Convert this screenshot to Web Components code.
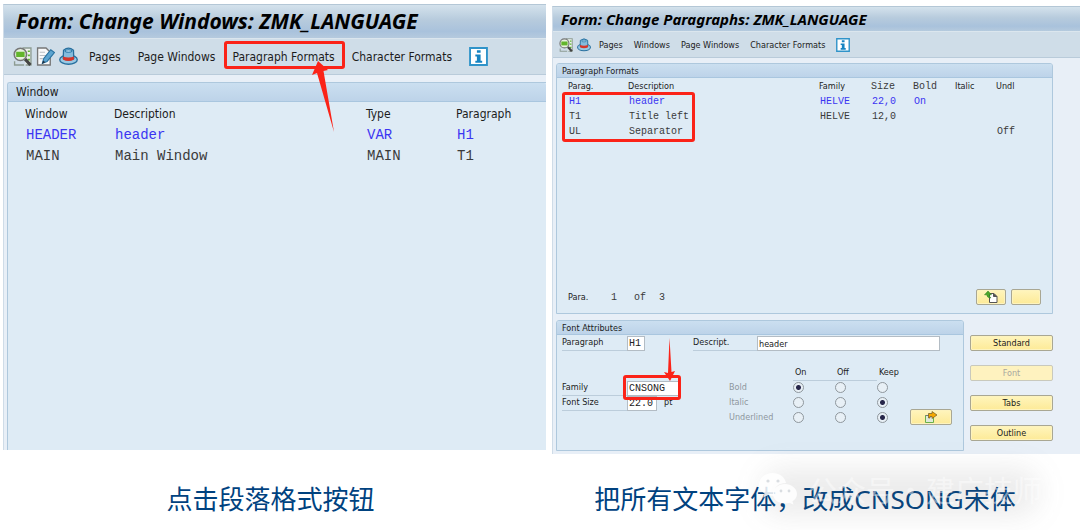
<!DOCTYPE html>
<html lang="zh">
<head>
<meta charset="utf-8">
<title>Form Paragraph Formats</title>
<style>
  body { margin: 0; background: #fff; color: #1c1c1c; font-family: "DejaVu Sans Condensed", "Noto Sans", sans-serif; overflow-x: hidden; }
</style>
</head>
<body>
<form-guide></form-guide>

<script>
const define = (name, css, html) => customElements.define(name, class extends HTMLElement {
  constructor() {
    super();
    const t = document.createElement('template');
    t.innerHTML = `<style>*{box-sizing:border-box}${css}</style>${html}`;
    this.attachShadow({ mode: 'open' }).append(t.content.cloneNode(true));
    for (const el of this.shadowRoot.querySelectorAll('[data-attr]'))
      el.textContent = this.getAttribute(el.dataset.attr) || '';
  }
});

const icons = {
  check: `<path d="M9 1h8v16h-5" fill="#eef3ee" stroke="#8d9c92" stroke-width="1.3"/><path d="M14 4h2M14 8h2M14 12h2" stroke="#5fb531" stroke-width="1.6"/><circle cx="7" cy="7" r="5.8" fill="#e6f2dd" stroke="#777" stroke-width="1.5"/><path d="M3 4.500h8v5H3z" fill="#62b52c"/><path d="M11.500 11.500 16.500 17" stroke="#444" stroke-width="3"/><path d="M1.500 13.500v3.500h9" fill="none" stroke="#8d9c92" stroke-width="1.3"/>`,
  edit: `<path d="M1.500 1h8l4 4v12h-12z" fill="#f8f9fa" stroke="#777" stroke-width="1.3"/><path d="M3.500 5h5M3.500 8h6M3.500 11h3" stroke="#b9bec4"/><path d="M6 15.500 7.300 11 14 2.600 17.500 5.300 10.500 13.700Z" fill="#5ca4d0" stroke="#2872a1" stroke-width="1"/><path d="m5.600 16 1.200-3.200 2 1.600z" fill="#234"/>`,
  hat: `<ellipse cx="9" cy="12" rx="8.300" ry="4.300" fill="#9ac9e4" stroke="#276f9e" stroke-width="1.300"/><path d="M4 11 4.300 3Q9-.8 13.700 3L14 11Q9 13.500 4 11Z" fill="#85bcdd" stroke="#276f9e" stroke-width="1.200"/><path d="M3.900 9Q9 11 14.100 9V12Q9 14.300 3.900 12Z" fill="#d5352a"/><ellipse cx="9" cy="3.800" rx="3.200" ry="1.200" fill="#b8dcf0" stroke="#2f7cac"/>`,
  info: `<path d="M1 1h16v16H1z" fill="#fff" stroke="#2f93c9" stroke-width="1.800"/><path d="M7.500 3h3.500v2.500H7.500zM6 7h5v6h1.500v2H6v-2h1.500V9H6z" fill="#1684c2"/>`
};
customElements.define('tool-icon', class extends HTMLElement {
  constructor() {
    super();
    this.attachShadow({ mode: 'open' }).innerHTML = `<style>:host{display:block}
      button{display:block;padding:0;border:0;background:none;width:var(--icon,20px);height:var(--icon,20px)}svg{display:block;width:100%;height:100%}</style>
      <button aria-label="${this.getAttribute('label')}"><svg viewBox="0 0 18 18">${icons[this.getAttribute('name')]}</svg></button>`;
  }
});

define('tool-button', `
  :host{display:block}
  button{padding:0;border:0;background:none;color:inherit;font:inherit;white-space:nowrap}`,
  `<button><slot></slot></button>`);

define('red-mark', `
  :host{position:absolute;display:block;border:3px solid #fb2318;border-radius:3px;pointer-events:none}
  ::slotted(svg){position:absolute;overflow:visible;display:block}`, `<slot></slot>`);

define('sap-window', `
  :host{display:flex;flex-direction:column;background:#e8eff7;border-top:1px solid #b4c7d6;border-left:1px solid #cfdce8;min-width:0}
  h1{margin:0;height:var(--title-h);padding-left:var(--title-x);display:flex;align-items:center;
    font:italic bold var(--title-size)/1 "Noto Sans",sans-serif;color:#000;white-space:nowrap;
    background:linear-gradient(#d4e2ec,#b7cbdd 45%,#a9c2dc 80%,#b5cade)}
  nav{height:var(--bar-h);display:flex;align-items:center;gap:var(--bar-gap);padding-left:var(--bar-x);
    background:#cfdde8;border-top:1px solid #dbe6ee;border-bottom:1px solid #b9cbda}
  main{flex:1;display:flex;flex-direction:column}`,
  `<h1 data-attr="heading"></h1><nav><slot name="bar"></slot></nav><main><slot></slot></main>`);

define('sap-panel', `
  :host{display:flex;flex-direction:column;background:#deebf5;border:1px solid #aec8dd;border-radius:3px 3px 0 0}
  h2{margin:0;height:var(--head-h);padding-left:var(--head-x);display:flex;align-items:center;font-size:inherit;font-weight:normal;
    background:linear-gradient(#cbdff0,#bdd3e9);border-bottom:1px solid #a9c6df;border-radius:2px 2px 0 0}`,
  `<h2 data-attr="heading"></h2><slot></slot>`);

const tableCss = `
  table{border-collapse:collapse;table-layout:fixed;width:100%}
  th,td{padding:0;height:var(--row);line-height:1;text-align:left;font-weight:normal;white-space:nowrap}
  td,th.mono{font-family:"Liberation Mono",monospace;font-size:var(--mono);color:#3a3a3a}
  td{padding-left:1px}
  tr.on td{color:#3b35f2}`;

define('window-list', `:host{display:block;padding:1px 0 0 17px}${tableCss}`, `
  <table>
    <colgroup><col style="width:89px"><col><col style="width:90px"><col style="width:90px"></colgroup>
    <thead><tr><th>Window</th><th>Description</th><th>Type</th><th>Paragraph</th></tr></thead>
    <tbody>
      <tr class="on"><td>HEADER</td><td>header</td><td>VAR</td><td>H1</td></tr>
      <tr><td>MAIN</td><td>Main Window</td><td>MAIN</td><td>T1</td></tr>
    </tbody>
  </table>`);

define('paragraph-list', `:host{display:block;position:relative;padding:1px 0 0 11px}${tableCss}
  red-mark{left:5px;top:14px;width:133px;height:50px}`, `
  <table>
    <colgroup><col style="width:60px"><col><col style="width:52px"><col style="width:42px"><col style="width:42px"><col style="width:41px"><col style="width:56px"></colgroup>
    <thead><tr><th>Parag.</th><th>Description</th><th>Family</th><th class="mono">Size</th><th class="mono">Bold</th><th>Italic</th><th>Undl</th></tr></thead>
    <tbody>
      <tr class="on"><td>H1</td><td>header</td><td>HELVE</td><td>22,0</td><td>On</td><td></td><td></td></tr>
      <tr><td>T1</td><td>Title left</td><td>HELVE</td><td>12,0</td><td></td><td></td><td></td></tr>
      <tr><td>UL</td><td>Separator</td><td></td><td></td><td></td><td></td><td>Off</td></tr>
    </tbody>
  </table>
  <red-mark></red-mark>`);

define('gold-button', `
  :host{display:block}
  button{display:flex;align-items:center;justify-content:center;width:100%;height:16px;padding:0;font:inherit;line-height:1;color:#1c1c1c;
    background:linear-gradient(#fff5bd,#fdea97);border:1px solid #a9a793;border-radius:2px;box-shadow:inset 0 0 0 1px #fdf3be}
  :host([off]) button{color:#a8a8a0;background:#fef2bf;border-color:#c9c9bd}`,
  `<button><slot></slot></button>`);

define('list-footer', `
  :host{display:flex;align-items:center;padding:0 11px;margin-top:auto;margin-bottom:8px;height:16px}
  span{font-family:"Liberation Mono",monospace;font-size:10px;color:#3a3a3a}
  .p{width:43px}.n{width:23px}.of{width:25px}.t{margin-right:auto}
  gold-button{width:30px;margin-left:5px}svg{width:14px;height:12px}`, `
  <div class="p">Para.</div><span class="n">1</span><span class="of">of</span><span class="t">3</span>
  <gold-button><svg viewBox="0 0 14 12"><path d="M5.500 2.500h4.500l3 3v6H5.500z" fill="#fff" stroke="#555"/><path d="M9.500 2v3.500H13" fill="#555" stroke="#555"/><path d="M4 0 7.500 3.800H5.200Q5.500 6 7 7 3 7 2.700 3.800H.5Z" fill="#4ba72b" stroke="#2d7a1e" stroke-width=".5"/></svg></gold-button>
  <gold-button></gold-button>`);

define('font-attributes', `
  :host{display:block;padding:1px 11px 0 5px}
  .row{display:flex;height:15px}
  label{border-bottom:1px solid #bccddb;line-height:13px;width:65px}
  input[type=text]{height:15px;margin:0;padding:0 1px;border:1px solid #b3bcc4;background:#fff;color:#222;font:10px "Liberation Mono",monospace;border-radius:0;min-width:0}
  #para{width:18px}
  #desc{flex:1;margin-right:12px;font:9px "DejaVu Sans Condensed",sans-serif}
  .d{margin-left:48px;width:64px}
  .low{display:flex;margin-top:14px}
  .fam{position:relative;padding-top:16px;width:167px}
  .fam span{margin-left:7px;line-height:13px}
  red-mark{left:61px;top:10px;width:58px;height:25px}
  table{border-collapse:collapse;table-layout:fixed;width:168px}
  th,td{padding:0;height:15px;line-height:1;text-align:left;font-weight:normal;color:#8e979e}
  thead th{color:#1c1c1c;text-align:left;padding-left:2px}
  thead th:nth-child(2),thead th:nth-child(3){border-bottom:1px solid #bccddb}
  td input{appearance:none;display:block;margin:0;width:11px;height:11px;border:1px solid #8f979d;border-radius:50%;background:#e8f0f6}
  td input:checked{background:radial-gradient(circle,#26264a 0 2px,#e8f0f6 3px)}
  gold-button{width:42px;align-self:flex-end;margin-left:auto}
  svg.go{width:14px;height:12px}`, `
  <div class="row"><label for="para">Paragraph</label><input type="text" id="para" value="H1">
    <label class="d" for="desc">Descript.</label><input type="text" id="desc" value="header"></div>
  <div class="low">
    <div class="fam">
      <div class="row"><label for="fam">Family</label><input type="text" id="fam" value="CNSONG" style="width:52px"></div>
      <div class="row"><label for="size">Font Size</label><input type="text" id="size" value="22.0" style="width:30px"><span>pt</span></div>
      <red-mark><svg style="left:36px;top:-40px" width="16" height="44" viewBox="0 0 16 44"><path d="M7.500 0 9.500 34 13 33 8 43 2 34 6 35Z" fill="#fb2318"/></svg></red-mark>
    </div>
    <table>
      <colgroup><col style="width:64px"><col style="width:42px"><col style="width:42px"><col></colgroup>
      <thead><tr><th></th><th>On</th><th>Off</th><th>Keep</th></tr></thead>
      <tbody>
        <tr><th>Bold</th><td><input type="radio" name="b" aria-label="Bold on" checked></td><td><input type="radio" name="b" aria-label="Bold off"></td><td><input type="radio" name="b" aria-label="Bold keep"></td></tr>
        <tr><th>Italic</th><td><input type="radio" name="i" aria-label="Italic on"></td><td><input type="radio" name="i" aria-label="Italic off"></td><td><input type="radio" name="i" aria-label="Italic keep" checked></td></tr>
        <tr><th>Underlined</th><td><input type="radio" name="u" aria-label="Underlined on"></td><td><input type="radio" name="u" aria-label="Underlined off"></td><td><input type="radio" name="u" aria-label="Underlined keep" checked></td></tr>
      </tbody>
    </table>
    <gold-button><svg class="go" viewBox="0 0 14 12"><path d="M1.500 4.500h8v7h-8z" fill="#dfe9d8" stroke="#68b04a"/><path d="M1.500 4.500h8" stroke="#777"/><path d="M4.500 7V2.500H8V.5L13 4 8 7.500V5.500H6V7Z" fill="#f5a800" stroke="#6b5a2a" stroke-width=".7"/></svg></gold-button>
  </div>`);

define('wechat-watermark', `
  :host{position:absolute;display:flex;align-items:center;gap:10px;right:38px;top:15px;height:40px;color:rgba(255,255,255,.45);
    font:29px/1 "Noto Sans CJK SC",sans-serif;white-space:nowrap;pointer-events:none}
  :host::before{content:"";position:absolute;inset:0 4px -6px 4px;background:rgba(90,90,90,.12);filter:blur(14px);border-radius:20px}
  svg{width:40px;height:34px;position:relative}span{position:relative}
  .dot{width:11px;text-align:center;text-indent:-9px}`, `
  <svg viewBox="0 0 40 34"><path d="M14.500 1C7 1 1 6 1 12.500c0 4 2.200 7 5.500 9l-1.300 4 5-2.400c2 .5 4 .7 6 .5C15 16 20 11 28 11 27 5 21.500 1 14.500 1Z" fill="#fff" fill-opacity=".85"/><path d="M27 12c-6.500 0-12 4.500-12 10s5.500 9.500 12 9.500c1.500 0 3-.3 4.500-.7l4 2-1-3.500c3-2 4.500-4.500 4.500-7.300C39 16.500 33.500 12 27 12Z" fill="#fff" fill-opacity=".85"/><g fill="#d9dde1"><circle cx="10" cy="9" r="1.600"/><circle cx="20" cy="9" r="1.600"/><circle cx="23" cy="19" r="1.400"/><circle cx="31" cy="19" r="1.400"/></g></svg>
  <span>公众号</span><span class="dot">·</span><span>建广技师</span>`);

define('form-guide', `
  :host{display:grid;grid-template-columns:543fr 528fr;column-gap:6px;padding:4px 0 0 3px;align-items:start}
  .l{--title-h:33px;--title-x:12px;--title-size:21px;--bar-h:37px;--bar-gap:17px;--bar-x:9px;--head-h:19px;--head-x:8px;--row:21px;--mono:14px;--icon:19px;font-size:12px;min-height:446px}
  .r{--title-h:24px;--title-x:8px;--title-size:15px;--bar-h:27px;--bar-gap:11px;--bar-x:6px;--head-h:14px;--head-x:5px;--row:15px;--mono:10px;--icon:14px;font-size:9px;min-height:448px;margin-top:2px}
  .icons{display:flex;gap:4px}
  .l .icons{margin-right:-6px}.r .icons{margin-right:-3px}
  .mark{position:relative}
  .mark red-mark{left:-8px;top:-9px;width:121px;height:28px}
  .l sap-panel{flex:1;margin:7px 0 0 3px;border-right:0;border-bottom:0;border-top-right-radius:0}
  .r .list{min-height:251px;margin:5px 27px 0 3px}
  .bottom{display:flex;gap:6px;margin:6px 27px 0 3px}
  .bottom sap-panel{flex:1;height:131px}
  .side{width:83px;display:flex;flex-direction:column;gap:14px;padding-top:15px}
  figure{margin:0;min-width:0}
  p{margin:0;color:#00427f;font:26px/38px "Noto Sans","Noto Sans CJK SC",sans-serif;text-align:center;white-space:nowrap}
  .cap{position:relative;height:76px}
  .l+.cap{padding:30px 8px 0 0}.r+.cap{padding:26px 22px 0 0}`, `
  <figure>
    <sap-window class="l" heading="Form: Change Windows: ZMK_LANGUAGE">
      <div slot="bar" class="icons"><tool-icon name="check" label="Check"></tool-icon><tool-icon name="edit" label="Change"></tool-icon><tool-icon name="hat" label="Header"></tool-icon></div>
      <tool-button slot="bar">Pages</tool-button>
      <tool-button slot="bar">Page Windows</tool-button>
      <div slot="bar" class="mark"><tool-button>Paragraph Formats</tool-button>
        <red-mark><svg style="left:84px;top:17px" width="26" height="72" viewBox="0 0 26 72"><path d="M7 0 17 9 12.500 10 23 71 6 12 1 14Z" fill="#fb2318"/></svg></red-mark></div>
      <tool-button slot="bar">Character Formats</tool-button>
      <tool-icon slot="bar" name="info" label="Information"></tool-icon>
      <sap-panel heading="Window"><window-list></window-list></sap-panel>
    </sap-window>
    <div class="cap"><p>点击段落格式按钮</p></div>
  </figure>
  <figure>
    <sap-window class="r" heading="Form: Change Paragraphs: ZMK_LANGUAGE">
      <div slot="bar" class="icons"><tool-icon name="check" label="Check"></tool-icon><tool-icon name="hat" label="Header"></tool-icon></div>
      <tool-button slot="bar">Pages</tool-button>
      <tool-button slot="bar">Windows</tool-button>
      <tool-button slot="bar">Page Windows</tool-button>
      <tool-button slot="bar">Character Formats</tool-button>
      <tool-icon slot="bar" name="info" label="Information"></tool-icon>
      <sap-panel class="list" heading="Paragraph Formats"><paragraph-list></paragraph-list><list-footer></list-footer></sap-panel>
      <div class="bottom">
        <sap-panel heading="Font Attributes"><font-attributes></font-attributes></sap-panel>
        <div class="side"><gold-button>Standard</gold-button><gold-button off>Font</gold-button><gold-button>Tabs</gold-button><gold-button>Outline</gold-button></div>
      </div>
    </sap-window>
    <div class="cap"><p>把所有文本字体，改成CNSONG宋体</p><wechat-watermark></wechat-watermark></div>
  </figure>`);
</script>
</body>
</html>
